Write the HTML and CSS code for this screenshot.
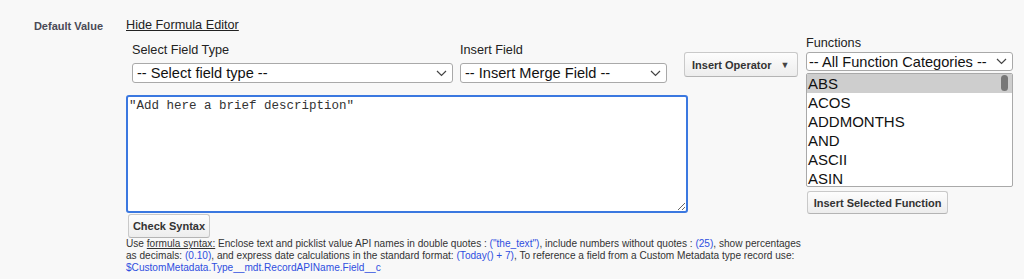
FILE: index.html
```html
<!DOCTYPE html>
<html lang="en">
<head>
    <meta charset="UTF-8">
    <meta name="viewport" content="width=device-width, initial-scale=1.0">
    <title>Default Value - Formula Editor</title>
    <link rel="stylesheet" href="styles.css">
</head>
<body>

<div class="field-row">
    <div class="field-label">Default Value</div>
    <div class="field-body">
        <a class="toggle-link" href="#">Hide Formula Editor</a>

        <div class="editor">
            <div class="editor-main">
                <div class="pickers">
                    <div class="picker picker-type">
                        <label>Select Field Type</label>
                        <div class="select">
                            <span>-- Select field type --</span>
                            <svg width="11" height="7" viewBox="0 0 11 7"><polyline points="1,1 5.5,5.5 10,1" fill="none" stroke="#444" stroke-width="1.2"/></svg>
                        </div>
                    </div>
                    <div class="picker picker-field">
                        <label>Insert Field</label>
                        <div class="select">
                            <span>-- Insert Merge Field --</span>
                            <svg width="11" height="7" viewBox="0 0 11 7"><polyline points="1,1 5.5,5.5 10,1" fill="none" stroke="#444" stroke-width="1.2"/></svg>
                        </div>
                    </div>
                </div>

                <textarea class="formula" spellcheck="false">"Add here a brief description"</textarea>

                <button class="btn btn-check">Check Syntax</button>

                <p class="help">
                    Use <u>formula syntax:</u> Enclose text and picklist value API names in double quotes : <span class="param">("the_text")</span>, include numbers without quotes : <span class="param">(25)</span>, show percentages<br>
                    as decimals: <span class="param">(0.10)</span>, and express date calculations in the standard format: <span class="param">(Today() + 7)</span>, To reference a field from a Custom Metadata type record use:<br>
                    <span class="param">$CustomMetadata.Type__mdt.RecordAPIName.Field__c</span>
                </p>
            </div>

            <button class="btn btn-operator">Insert Operator <span class="caret">&#9660;</span></button>

            <div class="functions">
                <label>Functions</label>
                <div class="select select-small">
                    <span>-- All Function Categories --</span>
                    <svg width="11" height="7" viewBox="0 0 11 7"><polyline points="1,1 5.5,5.5 10,1" fill="none" stroke="#444" stroke-width="1.2"/></svg>
                </div>
                <div class="listbox">
                    <div class="option selected">ABS</div>
                    <div class="option">ACOS</div>
                    <div class="option">ADDMONTHS</div>
                    <div class="option">AND</div>
                    <div class="option">ASCII</div>
                    <div class="option">ASIN</div>
                    <div class="thumb"></div>
                </div>
                <button class="btn btn-insert">Insert Selected Function</button>
            </div>
        </div>
    </div>
</div>

</body>
</html>
```

FILE: styles.css
```css
body {
    margin: 0;
    background-color: #f8f8f8;
    font-family: "Liberation Sans", Arial, sans-serif;
    color: #222;
}
.field-row {
    display: flex;
    padding-top: 17px;
}
.field-label {
    width: 126px;
    box-sizing: border-box;
    padding-right: 23px;
    padding-top: 1px;
    text-align: right;
    font-size: 11px;
    font-weight: bold;
    line-height: 16px;
    color: #4a4a56;
}
.field-body {
    display: flex;
    flex-direction: column;
    align-items: flex-start;
}
.toggle-link {
    font-size: 12.7px;
    line-height: 16px;
    color: #222;
    text-decoration: underline;
}
.editor {
    display: flex;
    align-items: flex-start;
    margin-top: 3px;
}
.editor-main {
    width: 562px;
}
.pickers {
    display: flex;
    gap: 7px;
    padding-left: 6px;
    margin-top: 6px;
}
.picker label,
.functions label {
    display: block;
    font-size: 12.7px;
    line-height: 16px;
    margin-bottom: 5px;
}
.picker-type {
    width: 321px;
}
.picker-field {
    width: 207px;
}
.select {
    display: flex;
    align-items: center;
    justify-content: space-between;
    height: 20px;
    box-sizing: border-box;
    padding: 0 5px 0 4px;
    background-color: white;
    border: 1px solid #a9a9a9;
    border-radius: 3px;
    font-size: 14.6px;
    white-space: nowrap;
    color: #111;
}
.select svg {
    flex-shrink: 0;
}
.select-small {
    height: 19px;
    padding-left: 2px;
}
.formula {
    display: block;
    width: 562px;
    height: 118px;
    margin: 12px 0 0 0;
    box-sizing: border-box;
    padding: 2px 1px;
    border: 2px solid #3b78e0;
    border-radius: 3px;
    background-color: white;
    font-family: "Liberation Mono", "Courier New", monospace;
    font-size: 12.5px;
    line-height: 15px;
    color: #333;
    outline: none;
    resize: vertical;
}
.btn {
    display: block;
    box-sizing: border-box;
    padding: 0 6px;
    background: linear-gradient(#fdfdfd, #ededed);
    border: 1px solid #c9c9c9;
    border-bottom-color: #b4b4b4;
    border-radius: 3px;
    font-family: "Liberation Sans", Arial, sans-serif;
    font-size: 11px;
    font-weight: bold;
    color: #333;
    white-space: nowrap;
}
.btn-check {
    margin: 1px 0 0 2px;
    height: 24px;
    width: 82px;
    padding: 0;
}
.help {
    margin: 0;
    font-size: 10.1px;
    line-height: 12px;
    color: #333;
    white-space: nowrap;
}
.param {
    color: #2f4fe0;
}
.btn-operator {
    margin: 16px 0 0 -4px;
    width: 114px;
    height: 25px;
    text-align: left;
    padding-left: 7px;
}
.caret {
    font-size: 9px;
    color: #444;
    margin-left: 6px;
    vertical-align: 1px;
}
.functions {
    width: 207px;
    margin-left: 8px;
}
.functions label {
    line-height: 14px;
    margin-bottom: 2px;
}
.listbox {
    position: relative;
    margin-top: 2px;
    height: 114px;
    box-sizing: border-box;
    background-color: white;
    border: 1px solid #a9a9a9;
    border-radius: 2px;
    overflow: hidden;
}
.option {
    padding-left: 1px;
    font-size: 15px;
    line-height: 19px;
    color: #111;
}
.option.selected {
    background-color: #cecece;
}
.thumb {
    position: absolute;
    top: 1px;
    right: 4px;
    width: 7px;
    height: 16px;
    border-radius: 4px;
    background-color: #777;
}
.btn-insert {
    margin: 4px 0 0 1px;
    width: 141px;
    height: 23px;
    padding: 0;
}
```
